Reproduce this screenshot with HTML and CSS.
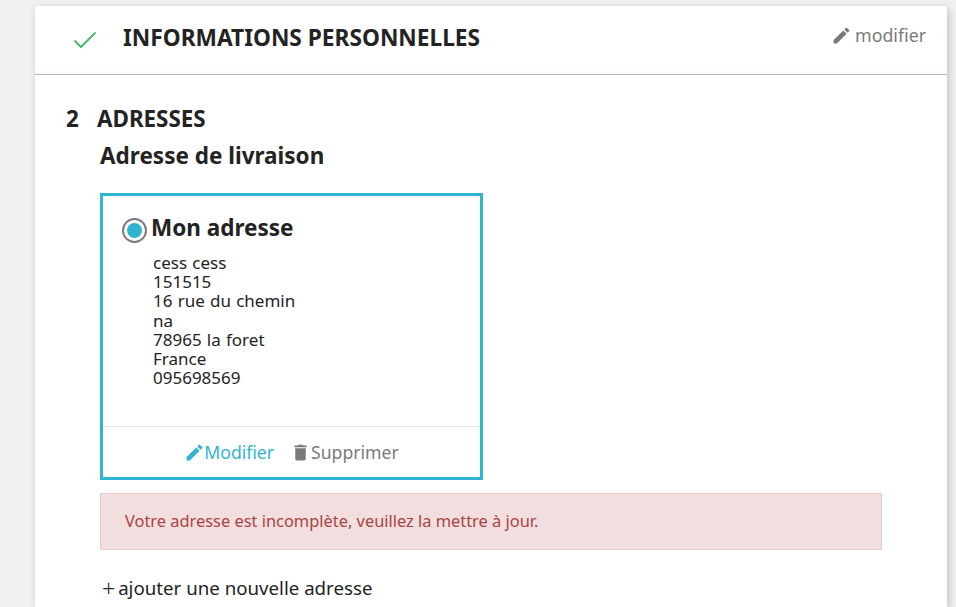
FILE: index.html
```html
<!DOCTYPE html>
<html lang="fr">
<head>
<meta charset="utf-8">
<title>Adresses</title>
<link rel="stylesheet" href="styles.css">
</head>
<body>
<main class="card">
  <section class="done">
    <svg class="check" viewBox="0 0 24 24" width="24" height="24"><path d="M1.500 12.500 L8 19 L22.500 4.500" fill="none" stroke="#4cbb6c" stroke-width="2"/></svg>
    <h1 class="done-title">INFORMATIONS PERSONNELLES</h1>
    <a class="edit"><svg class="ico" viewBox="0 0 24 24"><path fill="currentColor" d="M3 17.250V21h3.750L17.810 9.940l-3.750-3.750L3 17.250zM20.710 7.040a1 1 0 0 0 0-1.410l-2.340-2.340a1 1 0 0 0-1.410 0l-1.830 1.830 3.750 3.750 1.830-1.830z"/></svg>modifier</a>
  </section>
  <section class="step">
    <h1 class="step-title"><span class="step-num">2</span>ADRESSES</h1>
    <div class="step-body">
      <h2 class="sub">Adresse de livraison</h2>
      <article class="addr">
        <div class="addr-main">
          <header class="addr-head">
            <span class="radio"><span class="dot"></span></span>
            <span class="alias">Mon adresse</span>
          </header>
          <address class="lines">cess cess<br>151515<br>16 rue du chemin<br>na<br>78965 la foret<br>France<br>095698569</address>
        </div>
        <footer class="addr-foot">
          <a class="act act-blue"><svg class="ico" viewBox="0 0 24 24"><path fill="currentColor" d="M3 17.250V21h3.750L17.810 9.940l-3.750-3.750L3 17.250zM20.710 7.040a1 1 0 0 0 0-1.410l-2.340-2.340a1 1 0 0 0-1.410 0l-1.830 1.830 3.750 3.750 1.830-1.830z"/></svg><span class="act-label">Modifier</span></a>
          <a class="act act-grey"><svg class="ico" viewBox="0 0 24 24"><path fill="currentColor" d="M6 19c0 1.100.9 2 2 2h8c1.100 0 2-.9 2-2V7H6v12zM19 4h-3.500l-1-1h-5l-1 1H5v2h14V4z"/></svg>Supprimer</a>
        </footer>
      </article>
      <div class="alert"><span class="alert-text">Votre adresse est incomplète, veuillez la mettre à jour.</span></div>
      <a class="add"><span class="plus">+</span>ajouter une nouvelle adresse</a>
    </div>
  </section>
</main>
</body>
</html>
```
FILE: styles.css
```css
html, body { margin: 0; height: 100%; overflow: hidden; }
body {
  background: #f1f1f1;
  padding: 6px 9px 0 35px;
  box-sizing: border-box;
  font-family: "Noto Sans", sans-serif;
  color: #232323;
}
.card {
  background: #fff;
  box-shadow: 2px 2px 8px 0 rgba(0,0,0,.2);
  min-height: 601px;
}
.ico { width: 21px; height: 21px; flex: none; }
.done {
  display: flex;
  align-items: flex-start;
  height: 68px;
  border-bottom: 1px solid #b5b5b5;
  box-shadow: inset 0 -6px 6px -6px rgba(0,0,0,.06);
}
.check { margin: 22px 0 0 38px; }
.done-title {
  margin: 17px 0 0 26px;
  font-size: 22.7px;
  line-height: 30px;
  font-weight: 700;
}
.edit {
  margin: 16px 21px 0 auto;
  display: flex;
  align-items: center;
  gap: 3px;
  font-size: 17.8px;
  line-height: 26px;
  color: #7a7a7a;
}
.step { padding: 29px 65px 0 31px; }
.step-title {
  margin: 0;
  font-size: 22.4px;
  line-height: 30px;
  font-weight: 700;
}
.step-num { display: inline-block; width: 31px; }
.step-body { padding-left: 34px; }
.sub {
  margin: 7px 0 0;
  font-size: 22.5px;
  line-height: 30px;
  font-weight: 700;
}
.addr {
  box-sizing: border-box;
  width: 383px;
  height: 287px;
  margin-top: 22px;
  border: 3px solid #2fb5d2;
  display: flex;
  flex-direction: column;
}
.addr-main { flex: 1; padding: 17px 19px 0; }
.addr-head { display: flex; align-items: flex-start; gap: 4px; }
.radio {
  width: 25px;
  height: 25px;
  box-sizing: border-box;
  border: 2px solid #7a7a7a;
  border-radius: 50%;
  display: flex;
  align-items: center;
  justify-content: center;
  margin-top: 5px;
}
.dot { width: 15px; height: 15px; border-radius: 50%; background: #2fb5d2; }
.alias { font-size: 22.5px; line-height: 30px; font-weight: 700; }
.lines {
  margin: 10px 0 0 31px;
  font-style: normal;
  font-size: 17px;
  word-spacing: .8px;
  line-height: 19.2px;
}
.addr-foot {
  height: 50px;
  border-top: 1px solid #e5e5e5;
  display: flex;
  align-items: center;
  justify-content: center;
  gap: 16px;
  font-size: 17.6px;
}
.act { display: flex; align-items: center; }
.act-label { margin-left: -1px; }
.act-blue { color: #2fb5d2; }
.act-grey { color: #7a7a7a; }
.alert {
  box-sizing: border-box;
  width: 782px;
  height: 57px;
  margin-top: 13px;
  padding: 0 24px 2px;
  display: flex;
  align-items: center;
  background: #f2dede;
  border: 1px solid #ebcccc;
  color: #a94442;
  font-size: 16.4px;
}
.add {
  display: flex;
  align-items: center;
  margin: 23px 0 0 2px;
  font-size: 18.7px;
  line-height: 30px;
}
.plus { margin-right: 3px; font-size: 23px; font-weight: 300; line-height: 30px; }
```
